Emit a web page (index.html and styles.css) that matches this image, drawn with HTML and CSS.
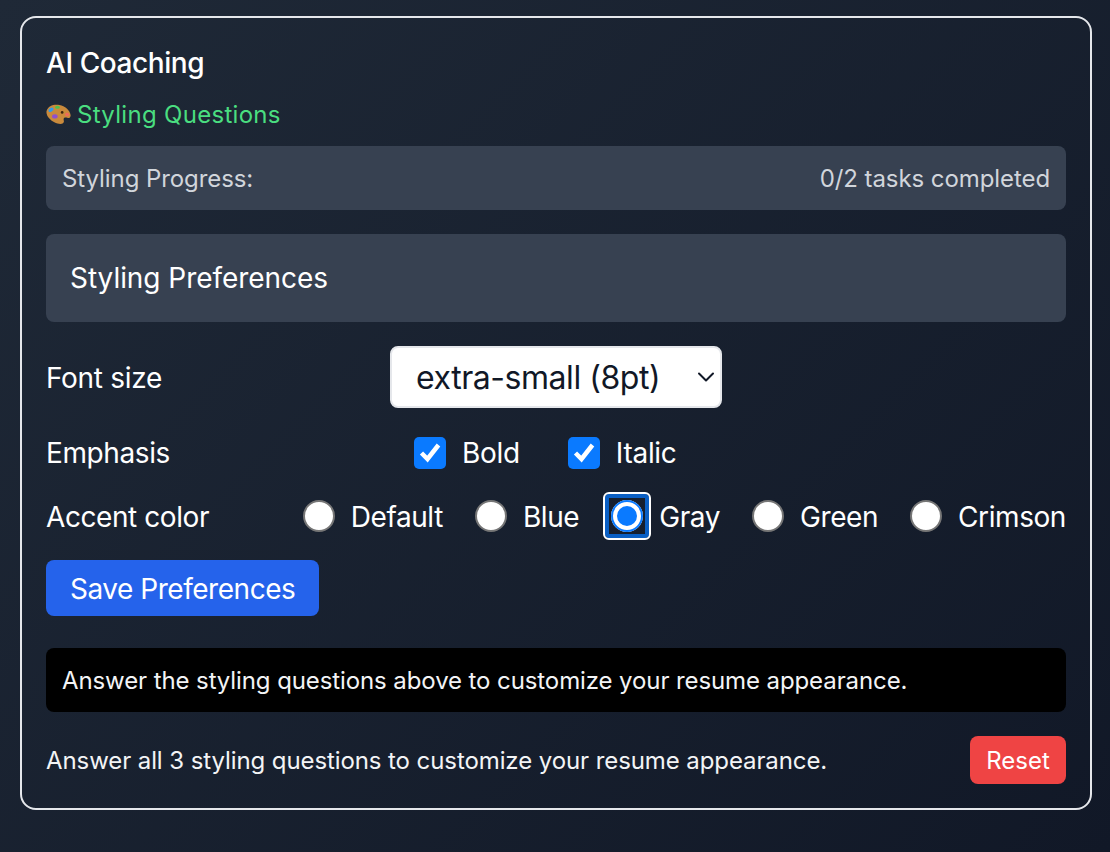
FILE: index.html
```html
<!DOCTYPE html>
<html lang="en">
<head>
<meta charset="utf-8">
<title>AI Coaching</title>
<link rel="stylesheet" href="styles.css">
</head>
<body>
<main class="card">
  <h1 class="title">AI Coaching</h1>
  <h2 class="section">
    <svg class="palette" viewBox="0 0 24 24" aria-hidden="true">
      <path fill="#c98a3c" d="M.6 8.500C2 3.500 8 1.800 13 2.900c5 1.100 10 4.900 10.600 9.500.3 2.300-1.500 3.400-3.100 2.800-1.800-.7-3.600-.6-3.600 1.300 0 1.500 1 2.700-.6 3.900-1.800 1.300-5.300.5-8.300-1C4.500 18 -.6 13 .6 8.500z"/>
      <ellipse fill="#2f9be8" cx="4.800" cy="7.500" rx="2.700" ry="1.700" transform="rotate(-35 4.800 7.500)"/>
      <ellipse fill="#4fc04a" cx="11" cy="5" rx="2.400" ry="1.500"/>
      <ellipse fill="#8f4fd0" cx="8.500" cy="13.800" rx="2.700" ry="2"/>
      <ellipse fill="#ef6a5a" cx="20.300" cy="12" rx="2" ry="1.600"/>
      <circle fill="#3a2412" cx="15.500" cy="10" r="1.300"/>
    </svg>
    Styling Questions
  </h2>
  <div class="progress">
    <span>Styling Progress:</span>
    <span>0/2 tasks completed</span>
  </div>
  <div class="prefs-head">Styling Preferences</div>
  <div class="row row-select">
    <label class="row-label" for="font-size">Font size</label>
    <div class="select-wrap">
      <select id="font-size" class="select">
        <option>extra-small (8pt)</option>
      </select>
      <svg class="chevron" viewBox="0 0 18 10" aria-hidden="true"><path d="M2 1.500l7 7 7-7" fill="none" stroke="#111827" stroke-width="2" stroke-linecap="round" stroke-linejoin="round"/></svg>
    </div>
  </div>
  <div class="row row-check">
    <span class="row-label">Emphasis</span>
    <div class="checks">
      <label class="check-item"><span class="checkbox"><svg viewBox="0 0 32 32" aria-hidden="true"><path d="M7.500 16l6 6L24.500 8" fill="none" stroke="#fff" stroke-width="4.500"/></svg></span>Bold</label>
      <label class="check-item"><span class="checkbox"><svg viewBox="0 0 32 32" aria-hidden="true"><path d="M7.500 16l6 6L24.500 8" fill="none" stroke="#fff" stroke-width="4.500"/></svg></span>Italic</label>
    </div>
  </div>
  <div class="row row-radio">
    <span class="row-label">Accent color</span>
    <div class="radios">
      <label class="radio-item"><span class="radio"></span>Default</label>
      <label class="radio-item"><span class="radio"></span>Blue</label>
      <label class="radio-item"><span class="radio radio-on"></span>Gray</label>
      <label class="radio-item"><span class="radio"></span>Green</label>
      <label class="radio-item"><span class="radio"></span>Crimson</label>
    </div>
  </div>
  <button class="save" type="button">Save Preferences</button>
  <div class="notice">Answer the styling questions above to customize your resume appearance.</div>
  <div class="footer">
    <span>Answer all 3 styling questions to customize your resume appearance.</span>
    <button class="reset" type="button">Reset</button>
  </div>
</main>
</body>
</html>
```
FILE: styles.css
```css
* { box-sizing: border-box; }
html, body { height: 100%; }
body {
  margin: 0;
  padding: 16px 18px 0 20px;
  background: linear-gradient(135deg, #1f2937, #111827);
  color: #fff;
  font-family: Inter, "Liberation Sans", sans-serif;
}
.card {
  height: 794px;
  border: 2px solid #e5e7eb;
  border-radius: 16px;
  padding: 24px;
  display: flex;
  flex-direction: column;
}
.title {
  margin: 0;
  padding-top: 1px;
  font-size: 28px;
  line-height: 40px;
  font-weight: 500;
  letter-spacing: -0.42px;
}
.section {
  margin: 15px 0 0;
  padding-top: 1px;
  display: flex;
  align-items: center;
  gap: 6px;
  font-size: 24px;
  line-height: 32px;
  font-weight: 400;
  letter-spacing: 0.3px;
  color: #4ade80;
}
.palette { width: 25px; height: 25px; flex: none; margin-top: -1px; }
.progress {
  margin-top: 15px;
  height: 64px;
  padding: 2px 16px 0;
  display: flex;
  align-items: center;
  justify-content: space-between;
  background: #374151;
  border-radius: 8px;
  color: #d1d5db;
  font-size: 24px;
  letter-spacing: -0.08px;
}
.prefs-head {
  margin-top: 24px;
  height: 88px;
  padding: 0 24px;
  display: flex;
  align-items: center;
  background: #374151;
  border-radius: 8px;
  font-size: 28px;
  font-weight: 400;
  letter-spacing: -0.05px;
}
.row { display: flex; align-items: center; font-size: 28px; letter-spacing: -0.3px; }
.row-select { margin-top: 24px; height: 62px; }
.row-label { flex: none; }
.row-select .row-label { width: 344px; padding-top: 2px; }
.select-wrap { position: relative; width: 332px; height: 62px; }
.select {
  appearance: none;
  width: 100%;
  height: 100%;
  padding: 2px 24px 0;
  background: #fff;
  border: 2px solid #e5e7eb;
  border-radius: 8px;
  color: #111827;
  font: 400 32px Inter, "Liberation Sans", sans-serif;
  letter-spacing: -0.45px;
}
.chevron { position: absolute; right: 7px; top: 26px; width: 18px; height: 10px; pointer-events: none; }
.row-check { margin-top: 13px; height: 64px; }
.row-check .row-label { width: 368px; letter-spacing: -0.4px; }
.checks { display: flex; gap: 48px; }
.check-item { display: flex; align-items: center; gap: 16px; }
.checkbox { width: 32px; height: 32px; border-radius: 5px; background: #0a7aff; display: block; }
.checkbox svg { display: block; width: 32px; height: 32px; }
.row-radio { margin-top: 0; height: 64px; justify-content: space-between; letter-spacing: -0.42px; }
.row-radio .row-label { padding-top: 2px; }
.radios { display: flex; align-items: center; gap: 32px; }
.radio-item { display: flex; align-items: center; gap: 16px; padding-top: 2px; }
.radio {
  position: relative;
  width: 32px;
  height: 32px;
  margin-top: -2px;
  display: block;
  border-radius: 50%;
  background: #fff;
  border: 2px solid #767676;
}
.radio-on {
  background: #0a7aff;
  border: 6px solid #fff;
  outline: 2px solid #0a7aff;
  outline-offset: -2px;
}
.radio-on::after {
  content: "";
  position: absolute;
  inset: -14px;
  border: 2px solid #fff;
  border-radius: 6px;
  box-shadow: inset 0 0 0 4px #0a5fc4;
}
.save {
  margin-top: 12px;
  align-self: flex-start;
  height: 56px;
  padding: 2px 24px 0;
  background: #2563eb;
  color: #fff;
  border: 0;
  border-radius: 8px;
  font: 400 28px Inter, "Liberation Sans", sans-serif;
  letter-spacing: -0.47px;
}
.notice {
  margin-top: 32px;
  height: 64px;
  padding: 0 16px;
  display: flex;
  align-items: center;
  background: #000;
  border-radius: 8px;
  font-size: 24px;
  letter-spacing: -0.1px;
  color: #f3f4f6;
}
.footer {
  margin-top: 24px;
  display: flex;
  align-items: center;
  justify-content: space-between;
  font-size: 24px;
  letter-spacing: -0.09px;
  color: #f3f4f6;
}
.reset {
  width: 96px;
  height: 48px;
  padding: 0;
  background: #ef4444;
  color: #fff;
  border: 0;
  border-radius: 8px;
  font: 400 24px Inter, "Liberation Sans", sans-serif;
}
```
